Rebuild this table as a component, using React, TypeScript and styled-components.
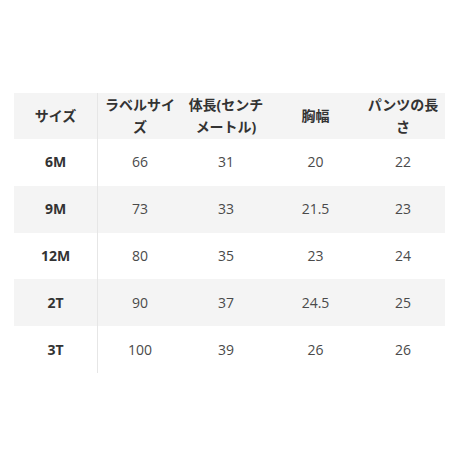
import React from "react";
import styled, { createGlobalStyle } from "styled-components";

const Global = createGlobalStyle`
  html, body { margin: 0; padding: 0; background: #fff; }
  body { font-family: "Open Sans", "Noto Sans CJK JP", sans-serif; }
`;

const Page = styled.div`
  width: 460px;
  height: 460px;
  padding: 93px 15px 0 14px;
  box-sizing: border-box;
`;

const Grid = styled.div`
  display: grid;
  grid-template-columns: 84px 84px 88px 91px 84px;
  grid-template-rows: 46px repeat(5, 46.8px);
`;

const Cell = styled.div<{ $bg: boolean; $first: boolean; $head: boolean; $bold: boolean }>`
  display: flex;
  align-items: center;
  justify-content: center;
  text-align: center;
  padding: 0 6px;
  box-sizing: border-box;
  background: ${(p) => (p.$bg ? "#f4f4f4" : "#fff")};
  border-right: ${(p) => (p.$first ? "1.5px solid #e6e6e6" : "none")};
  font-size: 14px;
  line-height: 22px;
  font-weight: ${(p) => (p.$bold ? 700 : 400)};
  color: ${(p) => (p.$bold ? "#333" : "#4a4a4a")};
  font-family: "Open Sans", "Noto Sans CJK JP", sans-serif;
`;

const header = ["サイズ", "ラベルサイズ", "体長(センチメートル)", "胸幅", "パンツの長さ"];
const rows = [
  ["6M", "66", "31", "20", "22"],
  ["9M", "73", "33", "21.5", "23"],
  ["12M", "80", "35", "23", "24"],
  ["2T", "90", "37", "24.5", "25"],
  ["3T", "100", "39", "26", "26"],
];

export default function App() {
  const all = [header, ...rows];
  return (
    <>
      <Global />
      <Page>
        <Grid>
          {all.map((r, ri) =>
            r.map((c, ci) => (
              <Cell
                key={`${ri}-${ci}`}
                $bg={ri % 2 === 0}
                $first={ci === 0}
                $head={ri === 0}
                $bold={ri === 0 || ci === 0}
              >
                {c}
              </Cell>
            ))
          )}
        </Grid>
      </Page>
    </>
  );
}
